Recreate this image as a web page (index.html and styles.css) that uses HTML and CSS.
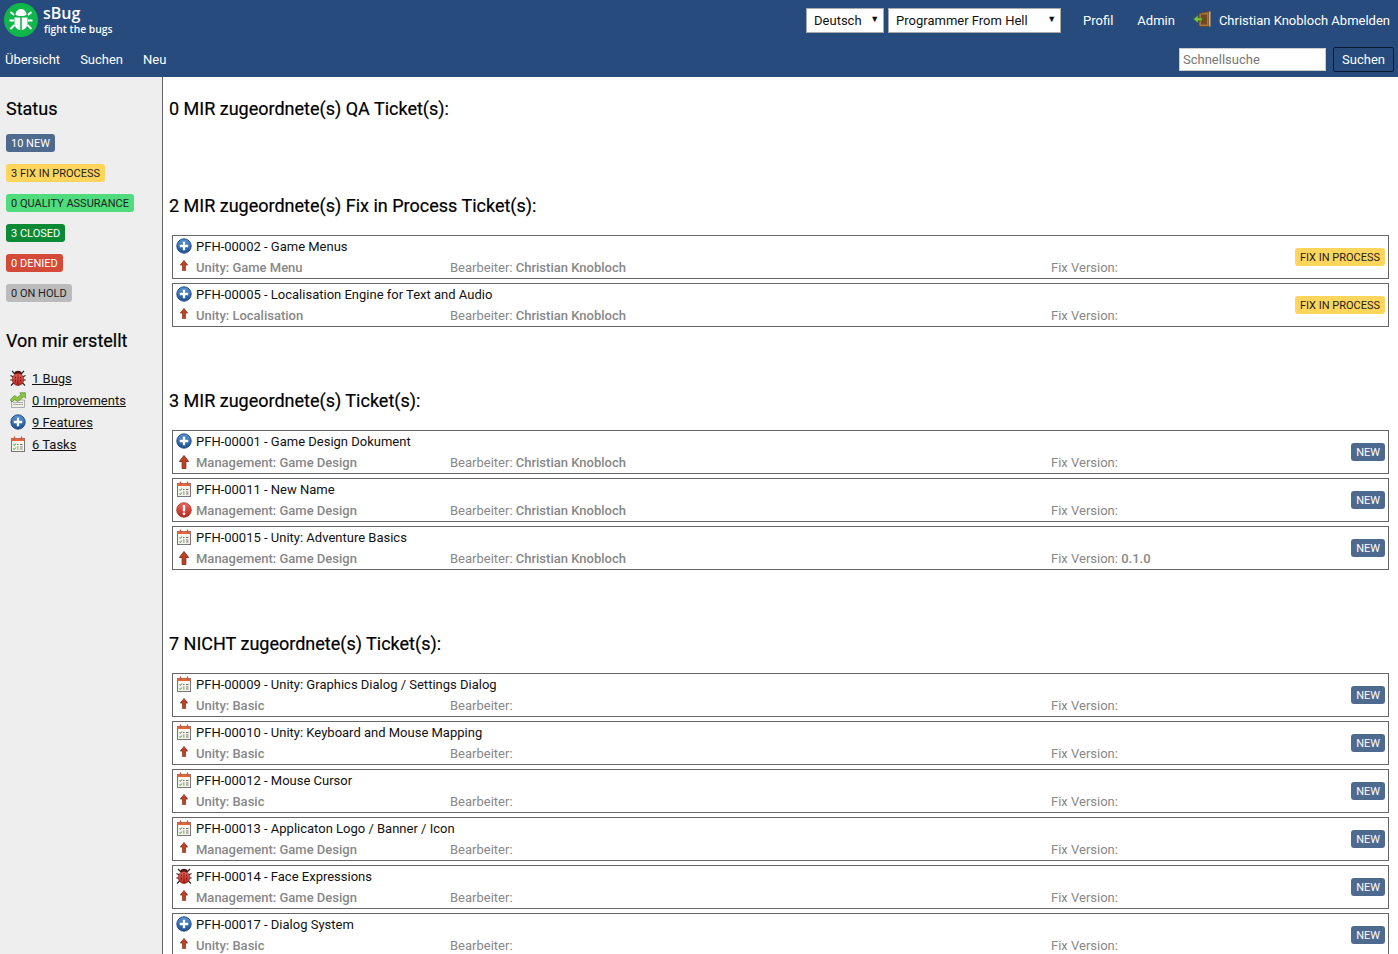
FILE: index.html
```html
<!DOCTYPE html>
<html lang="de">
<head>
<meta charset="utf-8">
<title>sBug</title>
<link rel="stylesheet" href="styles.css">
</head>
<body>
<svg class="defs" width="0" height="0" aria-hidden="true">
  <defs>
    <linearGradient id="gBlue" x1="0" y1="0" x2="0" y2="1"><stop offset="0" stop-color="#5b95d6"/><stop offset="1" stop-color="#1c4f94"/></linearGradient>
    <linearGradient id="gRed" x1="0" y1="0" x2="0" y2="1"><stop offset="0" stop-color="#f0665a"/><stop offset="1" stop-color="#b3261e"/></linearGradient>
    <symbol id="i-plus" viewBox="0 0 16 16">
      <circle cx="8" cy="8" r="7.2" fill="url(#gBlue)" stroke="#1c4377" stroke-width=".9"/>
      <path d="M8 3.8v8.4M3.8 8h8.4" stroke="#fff" stroke-width="2.3"/>
    </symbol>
    <symbol id="i-bug" viewBox="0 0 16 16">
      <path d="M5 4 2 1M11 4l3-3M3.500 7 .5 5.500M12.500 7l3-1.500M3.200 10H.3M12.800 10h2.900M4 12.500 1 15.500M12 12.500l3 3" stroke="#222" stroke-width="1.100" fill="none"/>
      <ellipse cx="8" cy="3.300" rx="3.600" ry="2.600" fill="#4d1512"/>
      <ellipse cx="8" cy="9.500" rx="5.800" ry="6" fill="url(#gRed)" stroke="#7d1410" stroke-width=".6"/>
      <path d="M8 4.500V15.500" stroke="#7d1410" stroke-width=".8"/>
      <path d="M4.800 7.500h1.200M10 7.500h1.200M4.800 10.500h1.200M10 10.500h1.200" stroke="#6d0f0c" stroke-width="1.300"/>
    </symbol>
    <symbol id="i-task" viewBox="0 0 16 16">
      <rect x="1.500" y="2.500" width="13" height="13" fill="#f8f6ec" stroke="#777"/>
      <rect x="1.500" y="2.500" width="13" height="2.500" fill="#e8663f"/>
      <path d="M4.500 .5v3.500M11.500 .5v3.500" stroke="#d8552f" stroke-width="1.400"/>
      <path d="m3.300 8.500 1 1 1.500-2M3.300 12.500l1 1 1.500-2" stroke="#2f9a34" stroke-width="1" fill="none"/>
      <path d="M7 8.500h1.500M10 8.500h2.500M7 11h1.500M10 11h2.500M7 13h1.500M10 13h2.500" stroke="#777" stroke-width="1"/>
    </symbol>
    <symbol id="i-imp" viewBox="0 0 16 16">
      <path d="M1.500 8h13v7.500h-13z" fill="#f2f2ea" stroke="#999" stroke-width=".8"/>
      <path d="M3 10.500h10M3 12.500h10" stroke="#aaa" stroke-width="1"/>
      <path d="M.3 8 4.500 3.500l2.800 2 4-3L9.800.8h6v5.400L14 4.500 7.600 9.500 4.800 7.300 2.200 10z" fill="#8cc63f" stroke="#4f8a1e" stroke-width=".7"/>
    </symbol>
    <symbol id="i-arrow" viewBox="0 0 10 14">
      <path d="M5 .5 9.700 6.500H6.900v7H3.100v-7H.3z" fill="#c4401f" stroke="#6f2510" stroke-width=".8"/>
    </symbol>
    <symbol id="i-alert" viewBox="0 0 16 16">
      <circle cx="8" cy="8" r="7.300" fill="url(#gRed)" stroke="#a3352c" stroke-width=".8"/>
      <rect x="6.800" y="3" width="2.400" height="6.500" rx=".8" fill="#fff"/>
      <circle cx="8" cy="11.800" r="1.400" fill="#fff"/>
    </symbol>
    <symbol id="i-door" viewBox="0 0 18 16">
      <path d="M6 2.500 16 .5v15H6z" fill="#a8743c" stroke="#5c3d1c" stroke-width=".7"/>
      <path d="M8 3.500h6v10H8z" fill="#6e4a24"/>
      <path d="M16 .5h1.500v15H16z" fill="#d9b071"/>
      <path d="M.5 8 5 4.500V7h4v2.500H5V12z" fill="#7fc241" stroke="#3f7d1a" stroke-width=".6"/>
    </symbol>
  </defs>
</svg>

<header class="topbar">
  <div class="topbar-row topbar-row-first">
    <a class="brand" href="#">
      <svg class="brand-logo" viewBox="0 0 34 34" aria-hidden="true">
        <circle cx="17" cy="17" r="17" fill="#0fb74a"/>
        <path d="M11.500 11.500c0-3 2.500-5.500 5.500-5.500s5.500 2.500 5.500 5.500c0 .8-2 1.500-5.500 1.500s-5.500-.7-5.500-1.500z" fill="#fff"/>
        <path d="M10.500 14.500h5.700V27c-3.500-.5-5.700-3-5.700-7zM23.500 14.500h-5.700V27c3.500-.5 5.700-3 5.700-7z" fill="#fff"/>
        <path d="M10 12 6.500 9M24 12l3.500-3M10 17.500H5.500M24 17.500h4.500M10.500 22l-4 4M23.500 22l4 4" stroke="#fff" stroke-width="1.900" fill="none"/>
      </svg>
      <span class="brand-text">
        <span class="brand-name">sBug</span>
        <span class="brand-tag">fight the bugs</span>
      </span>
    </a>
    <div class="top-actions">
      <div class="picker picker-lang"><span>Deutsch</span><i class="picker-arrow">▼</i></div>
      <div class="picker picker-project"><span>Programmer From Hell</span><i class="picker-arrow">▼</i></div>
      <a class="nav-link nav-profil" href="#">Profil</a>
      <a class="nav-link nav-admin" href="#">Admin</a>
      <svg class="door-icon" aria-hidden="true"><use href="#i-door"/></svg>
      <a class="nav-link" href="#">Christian Knobloch Abmelden</a>
    </div>
  </div>
  <div class="topbar-row topbar-row-second">
    <nav class="main-nav">
      <a class="nav-link" href="#">Übersicht</a>
      <a class="nav-link" href="#">Suchen</a>
      <a class="nav-link" href="#">Neu</a>
    </nav>
    <form class="search">
      <input class="search-input" type="text" placeholder="Schnellsuche">
      <button class="search-btn" type="button">Suchen</button>
    </form>
  </div>
</header>

<div class="layout">
  <aside class="sidebar">
    <h2 class="side-title">Status</h2>
    <ul class="status-list">
      <li><span class="badge badge-new">10 NEW</span></li>
      <li><span class="badge badge-fix">3 FIX IN PROCESS</span></li>
      <li><span class="badge badge-qa">0 QUALITY ASSURANCE</span></li>
      <li><span class="badge badge-closed">3 CLOSED</span></li>
      <li><span class="badge badge-denied">0 DENIED</span></li>
      <li><span class="badge badge-hold">0 ON HOLD</span></li>
    </ul>
    <h2 class="side-title side-title-second">Von mir erstellt</h2>
    <ul class="mine-list">
      <li><svg class="icon" aria-hidden="true"><use href="#i-bug"/></svg><a href="#">1 Bugs</a></li>
      <li><svg class="icon" aria-hidden="true"><use href="#i-imp"/></svg><a href="#">0 Improvements</a></li>
      <li><svg class="icon" aria-hidden="true"><use href="#i-plus"/></svg><a href="#">9 Features</a></li>
      <li><svg class="icon" aria-hidden="true"><use href="#i-task"/></svg><a href="#">6 Tasks</a></li>
    </ul>
  </aside>

  <main class="content">
    <section class="group group-empty">
      <h2 class="group-title">0 MIR zugeordnete(s) QA Ticket(s):</h2>
    </section>

    <section class="group">
      <h2 class="group-title">2 MIR zugeordnete(s) Fix in Process Ticket(s):</h2>
      <article class="ticket">
        <div class="t-title"><svg class="icon" aria-hidden="true"><use href="#i-plus"/></svg><span>PFH-00002 - Game Menus</span></div>
        <div class="t-meta"><svg class="arrow" aria-hidden="true"><use href="#i-arrow"/></svg><span class="t-unit">Unity: Game Menu</span><span class="t-owner">Bearbeiter: <b>Christian Knobloch</b></span><span class="t-fix">Fix Version:</span></div>
        <span class="badge badge-fix t-badge">FIX IN PROCESS</span>
      </article>
      <article class="ticket">
        <div class="t-title"><svg class="icon" aria-hidden="true"><use href="#i-plus"/></svg><span>PFH-00005 - Localisation Engine for Text and Audio</span></div>
        <div class="t-meta"><svg class="arrow" aria-hidden="true"><use href="#i-arrow"/></svg><span class="t-unit">Unity: Localisation</span><span class="t-owner">Bearbeiter: <b>Christian Knobloch</b></span><span class="t-fix">Fix Version:</span></div>
        <span class="badge badge-fix t-badge">FIX IN PROCESS</span>
      </article>
    </section>

    <section class="group">
      <h2 class="group-title">3 MIR zugeordnete(s) Ticket(s):</h2>
      <article class="ticket">
        <div class="t-title"><svg class="icon" aria-hidden="true"><use href="#i-plus"/></svg><span>PFH-00001 - Game Design Dokument</span></div>
        <div class="t-meta"><svg class="arrow arrow-high" aria-hidden="true"><use href="#i-arrow"/></svg><span class="t-unit">Management: Game Design</span><span class="t-owner">Bearbeiter: <b>Christian Knobloch</b></span><span class="t-fix">Fix Version:</span></div>
        <span class="badge badge-new t-badge">NEW</span>
      </article>
      <article class="ticket">
        <div class="t-title"><svg class="icon" aria-hidden="true"><use href="#i-task"/></svg><span>PFH-00011 - New Name</span></div>
        <div class="t-meta"><svg class="icon" aria-hidden="true"><use href="#i-alert"/></svg><span class="t-unit">Management: Game Design</span><span class="t-owner">Bearbeiter: <b>Christian Knobloch</b></span><span class="t-fix">Fix Version:</span></div>
        <span class="badge badge-new t-badge">NEW</span>
      </article>
      <article class="ticket">
        <div class="t-title"><svg class="icon" aria-hidden="true"><use href="#i-task"/></svg><span>PFH-00015 - Unity: Adventure Basics</span></div>
        <div class="t-meta"><svg class="arrow arrow-high" aria-hidden="true"><use href="#i-arrow"/></svg><span class="t-unit">Management: Game Design</span><span class="t-owner">Bearbeiter: <b>Christian Knobloch</b></span><span class="t-fix">Fix Version: <b>0.1.0</b></span></div>
        <span class="badge badge-new t-badge">NEW</span>
      </article>
    </section>

    <section class="group">
      <h2 class="group-title">7 NICHT zugeordnete(s) Ticket(s):</h2>
      <article class="ticket">
        <div class="t-title"><svg class="icon" aria-hidden="true"><use href="#i-task"/></svg><span>PFH-00009 - Unity: Graphics Dialog / Settings Dialog</span></div>
        <div class="t-meta"><svg class="arrow" aria-hidden="true"><use href="#i-arrow"/></svg><span class="t-unit">Unity: Basic</span><span class="t-owner">Bearbeiter:</span><span class="t-fix">Fix Version:</span></div>
        <span class="badge badge-new t-badge">NEW</span>
      </article>
      <article class="ticket">
        <div class="t-title"><svg class="icon" aria-hidden="true"><use href="#i-task"/></svg><span>PFH-00010 - Unity: Keyboard and Mouse Mapping</span></div>
        <div class="t-meta"><svg class="arrow" aria-hidden="true"><use href="#i-arrow"/></svg><span class="t-unit">Unity: Basic</span><span class="t-owner">Bearbeiter:</span><span class="t-fix">Fix Version:</span></div>
        <span class="badge badge-new t-badge">NEW</span>
      </article>
      <article class="ticket">
        <div class="t-title"><svg class="icon" aria-hidden="true"><use href="#i-task"/></svg><span>PFH-00012 - Mouse Cursor</span></div>
        <div class="t-meta"><svg class="arrow" aria-hidden="true"><use href="#i-arrow"/></svg><span class="t-unit">Unity: Basic</span><span class="t-owner">Bearbeiter:</span><span class="t-fix">Fix Version:</span></div>
        <span class="badge badge-new t-badge">NEW</span>
      </article>
      <article class="ticket">
        <div class="t-title"><svg class="icon" aria-hidden="true"><use href="#i-task"/></svg><span>PFH-00013 - Applicaton Logo / Banner / Icon</span></div>
        <div class="t-meta"><svg class="arrow" aria-hidden="true"><use href="#i-arrow"/></svg><span class="t-unit">Management: Game Design</span><span class="t-owner">Bearbeiter:</span><span class="t-fix">Fix Version:</span></div>
        <span class="badge badge-new t-badge">NEW</span>
      </article>
      <article class="ticket">
        <div class="t-title"><svg class="icon" aria-hidden="true"><use href="#i-bug"/></svg><span>PFH-00014 - Face Expressions</span></div>
        <div class="t-meta"><svg class="arrow" aria-hidden="true"><use href="#i-arrow"/></svg><span class="t-unit">Management: Game Design</span><span class="t-owner">Bearbeiter:</span><span class="t-fix">Fix Version:</span></div>
        <span class="badge badge-new t-badge">NEW</span>
      </article>
      <article class="ticket">
        <div class="t-title"><svg class="icon" aria-hidden="true"><use href="#i-plus"/></svg><span>PFH-00017 - Dialog System</span></div>
        <div class="t-meta"><svg class="arrow" aria-hidden="true"><use href="#i-arrow"/></svg><span class="t-unit">Unity: Basic</span><span class="t-owner">Bearbeiter:</span><span class="t-fix">Fix Version:</span></div>
        <span class="badge badge-new t-badge">NEW</span>
      </article>
    </section>
  </main>
</div>
</body>
</html>
```
FILE: styles.css
```css
* { box-sizing: border-box; }
html, body { height: 100%; overflow: hidden; }
body {
  margin: 0;
  font-family: Roboto, "Liberation Sans", sans-serif;
  font-size: 13px;
  color: #111;
  background: #fff;
  display: flex;
  flex-direction: column;
}
.defs { position: absolute; }
a { color: inherit; }
ul { list-style: none; margin: 0; padding: 0; }
h2 { margin: 0; font-weight: 400; font-size: 18px; line-height: 24px; color: #000; -webkit-text-stroke: .2px #000; }

/* top bar */
.topbar { background: #274b7d; height: 77px; flex: none; color: #fff; }
.topbar-row { display: flex; align-items: center; justify-content: space-between; }
.topbar-row-first { height: 40px; padding: 0 8px 0 4px; }
.topbar-row-second { height: 37px; padding: 1px 4px 0 5px; }

.brand { display: flex; align-items: center; gap: 5px; text-decoration: none; color: #fff; }
.brand-logo { width: 34px; height: 34px; }
.brand-text { display: flex; flex-direction: column; padding-top: 1px; font-family: "Open Sans", sans-serif; }
.brand-name { font-size: 16px; line-height: 17px; font-weight: 600; }
.brand-tag { font-size: 10.300px; line-height: 15px; font-weight: 600; padding-left: 1px; }

.top-actions { display: flex; align-items: center; }
.picker {
  position: relative;
  height: 25px;
  background: #fff;
  border: 1px solid #aaa;
  color: #111;
  font-size: 13px;
  line-height: 23px;
  padding-left: 7px;
}
.picker-lang { width: 78px; margin-right: 4px; }
.picker-project { width: 173px; }
.picker-arrow {
  position: absolute;
  right: 4px;
  top: 0;
  font-style: normal;
  font-size: 9px;
  line-height: 20px;
  color: #111;
}
.nav-link { color: #fff; text-decoration: none; font-size: 13px; }
.nav-profil { margin-left: 22px; }
.nav-admin { margin-left: 24px; }
.door-icon { width: 18px; height: 16px; margin: 0 8px 2px 18px; }

.main-nav { display: flex; gap: 20px; }
.search { display: flex; align-items: center; gap: 7px; }
.search-input {
  width: 147px;
  height: 23px;
  border: 1px solid #ccc;
  background: #fff;
  padding: 0 3px;
  font: 13px Roboto, sans-serif;
  color: #111;
}
.search-input::placeholder { color: #777; opacity: 1; }
.search-btn {
  width: 61px;
  height: 25px;
  background: #274b7d;
  color: #fff;
  border: 1px solid #0b1a33;
  border-radius: 2px;
  font: 13px Roboto, sans-serif;
  padding: 0;
}

/* page frame */
.layout { flex: 1; display: flex; min-height: 0; }
.sidebar {
  width: 163px;
  flex: none;
  background: #eee;
  border-right: 1px solid #666;
  padding: 20px 0 0 6px;
}
.side-title-second { margin-top: 27px; }

.badge {
  display: inline-block;
  height: 18px;
  line-height: 18px;
  padding: 1px 5px 0;
  border-radius: 3px;
  font-size: 11px;
}
.badge-new { background: #4f6a8f; color: #fff; }
.badge-fix { background: #ffd55c; color: #222; }
.badge-qa { background: #4fdc7c; color: #222; }
.badge-closed { background: #0a8a35; color: #fff; }
.badge-denied { background: #d44a38; color: #fff; }
.badge-hold { background: #bbb; color: #222; }

.status-list { display: flex; flex-direction: column; gap: 12px; margin-top: 13px; }
.status-list li { display: flex; height: 18px; }

.mine-list { display: flex; flex-direction: column; margin-top: 14px; padding-left: 4px; }
.mine-list li { display: flex; align-items: center; gap: 6px; height: 22px; }
.mine-list a { color: #111; }
.icon { width: 16px; height: 16px; flex: none; }

/* tickets */
.content { flex: 1; min-width: 0; padding: 20px 9px 0 6px; }
.group { margin-bottom: 62px; }
.group-empty { margin-bottom: 73px; }
.group-title { margin-bottom: 17px; }

.ticket {
  position: relative;
  height: 44px;
  margin: 0 0 4px 3px;
  border: 1px solid #666;
  padding: 0 0 0 3px;
  display: flex;
  flex-direction: column;
}
.t-title { display: flex; align-items: center; gap: 4px; height: 20px; color: #111; }
.t-meta {
  display: grid;
  grid-template-columns: 20px 254px 601px auto;
  align-items: center;
  height: 22px;
  color: #888;
}
.t-unit { font-weight: 500; }
.t-owner b, .t-fix b { font-weight: 500; }
.arrow { width: 10px; height: 11px; margin: 0 0 3px 3px; }
.arrow-high { height: 14px; margin-bottom: 0; }
.t-badge { position: absolute; right: 3px; top: 12px; }
```
